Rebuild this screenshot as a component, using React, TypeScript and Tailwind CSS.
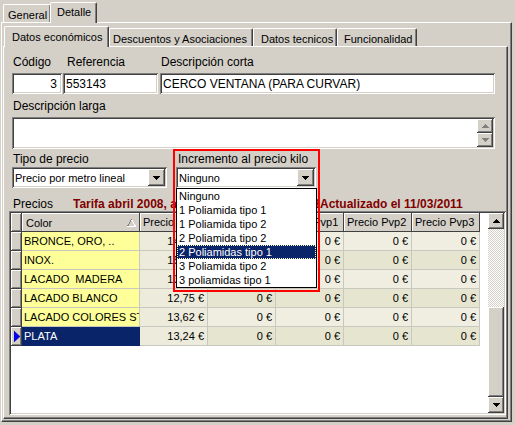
import React from "react";

const RAISED =
  "shadow-[inset_-1px_-1px_#404040,inset_1px_1px_#ffffff,inset_-2px_-2px_#808080]";
const SUNKEN =
  "shadow-[inset_1px_1px_#808080,inset_-1px_-1px_#ffffff,inset_2px_2px_#404040,inset_-2px_-2px_#d4d0c8]";

const rows = [
  { color: "BRONCE, ORO, ..", price: "14,07 €" },
  { color: "INOX.", price: "15,36 €" },
  { color: "LACADO  MADERA", price: "13,98 €" },
  { color: "LACADO BLANCO", price: "12,75 €" },
  { color: "LACADO COLORES STANDARD", price: "13,62 €" },
  { color: "PLATA", price: "13,24 €", selected: true },
];

const headers = ["Precio Coste", "Precio Pvp", "Precio Pvp1", "Precio Pvp2", "Precio Pvp3"];

const options = [
  "Ninguno",
  "1 Poliamida tipo 1",
  "1 Poliamida tipo 2",
  "2 Poliamida tipo 2",
  "2 Poliamidas tipo 1",
  "3 Poliamida tipo 2",
  "3 poliamidas tipo 1",
];

function DownArrow({ color = "#000000" }: { color?: string }) {
  return (
    <svg width="7" height="4" viewBox="0 0 7 4" shapeRendering="crispEdges">
      <path d="M0 0h7v1H0zM1 1h5v1H1zM2 2h3v1H2zM3 3h1v1H3z" fill={color} />
    </svg>
  );
}

function UpArrow({ color = "#000000" }: { color?: string }) {
  return (
    <svg width="7" height="4" viewBox="0 0 7 4" shapeRendering="crispEdges">
      <path d="M3 0h1v1H3zM2 1h3v1H2zM1 2h5v1H1zM0 3h7v1H0z" fill={color} />
    </svg>
  );
}

function Select({ value, width }: { value: string; width: string }) {
  return (
    <div className={`flex h-[21px] items-center bg-white pl-[3px] pr-[2px] text-[11px] ${width} ${SUNKEN}`}>
      <span className="flex-1">{value}</span>
      <div className={`flex h-[17px] w-[17px] items-center justify-center bg-[#d4d0c8] ${RAISED}`}>
        <DownArrow />
      </div>
    </div>
  );
}

export default function App() {
  return (
    <div className="relative h-[425px] w-[515px] overflow-hidden bg-[#d4d0c8] font-['Liberation_Sans',Arial,sans-serif] text-[12px] leading-[14px] text-black">
      {/* outer tabs */}
      <div className="flex h-[22px] items-end pl-[3px] text-[11px]">
        <div className="h-[18px] w-[48px] rounded-t-[2px] border-l border-r border-t border-white border-r-[#404040] pl-[4px] pt-[3px] shadow-[inset_-1px_0_#808080]">
          General
        </div>
        <div className="relative z-10 -mb-px -ml-px h-[21px] w-[47px] rounded-t-[2px] border-l border-r border-t border-white border-r-[#404040] bg-[#d4d0c8] pl-[6px] pt-[2px] shadow-[inset_-1px_0_#808080]">
          Detalle
        </div>
      </div>

      {/* outer panel */}
      <div className="ml-[1px] flex h-[400px] w-[511px] flex-col border border-white border-b-[#404040] border-r-[#404040] pl-[1px] pt-[3px] shadow-[inset_-1px_-1px_#808080]">
        {/* inner tabs */}
        <div className="flex h-[20px] items-end text-[11px]">
          <div className="relative z-10 -mb-px ml-[1px] h-[21px] w-[105px] rounded-t-[2px] border-l border-r border-t border-white border-r-[#404040] bg-[#d4d0c8] pl-[7px] pt-[3px] shadow-[inset_-1px_0_#808080]">
            Datos económicos
          </div>
          <div className="h-[18px] w-[144px] rounded-t-[2px] border-l border-r border-t border-white border-r-[#404040] pl-[3px] pt-[3px] shadow-[inset_-1px_0_#808080]">
            Descuentos y Asociaciones
          </div>
          <div className="h-[18px] w-[84px] rounded-t-[2px] border-l border-r border-t border-white border-r-[#404040] pl-[7px] pt-[3px] shadow-[inset_-1px_0_#808080]">
            Datos tecnicos
          </div>
          <div className="h-[18px] w-[80px] rounded-t-[2px] border-l border-r border-t border-white border-r-[#404040] pl-[6px] pt-[3px] shadow-[inset_-1px_0_#808080]">
            Funcionalidad
          </div>
        </div>

        {/* inner panel */}
        <div className="h-[373px] w-[505px] border border-white border-b-[#404040] border-r-[#404040] pl-[8px] pt-[8px] shadow-[inset_-1px_-1px_#808080]">
          <div className="flex">
            <div className="w-[50px]">
              <div className="h-[14px] pl-[1px]">Código</div>
              <div className={`mt-[4px] h-[21px] bg-white pr-[5px] pt-[4px] text-right ${SUNKEN}`}>3</div>
            </div>
            <div className="ml-[1px] w-[95px]">
              <div className="h-[14px] pl-[4px]">Referencia</div>
              <div className={`mt-[4px] h-[21px] bg-white pl-[3px] pt-[4px] ${SUNKEN}`}>553143</div>
            </div>
            <div className="ml-[2px] w-[335px]">
              <div className="h-[14px] pl-[1px]">Descripción corta</div>
              <div className={`mt-[4px] h-[21px] bg-white pl-[3px] pt-[4px] ${SUNKEN}`}>
                CERCO VENTANA (PARA CURVAR)
              </div>
            </div>
          </div>

          <div className="mt-[5px] h-[14px] pl-[1px]">Descripción larga</div>
          <div className={`mt-[4px] flex h-[32px] w-[483px] justify-end bg-white pr-[2px] pt-[2px] ${SUNKEN}`}>
            <div className="flex flex-col">
              <div className={`flex h-[14px] w-[16px] items-center justify-center bg-[#d4d0c8] ${RAISED}`}>
                <UpArrow color="#808080" />
              </div>
              <div className={`flex h-[14px] w-[16px] items-center justify-center bg-[#d4d0c8] ${RAISED}`}>
                <DownArrow color="#808080" />
              </div>
            </div>
          </div>

          <div className="mt-[3px] flex">
            <div className="w-[155px]">
              <div className="h-[14px] pl-[1px]">Tipo de precio</div>
              <div className="mt-[1px]">
                <Select value="Precio por metro lineal" width="w-[155px]" />
              </div>
            </div>
            <div className="ml-[9px] w-[140px]">
              <div className="h-[14px] pl-[2px]">Incremento al precio kilo</div>
              <div className="mt-[1px]">
                <Select value="Ninguno" width="w-[140px]" />
              </div>
            </div>
          </div>

          <div className="mt-[9px] flex h-[14px]">
            <span className="w-[61px] pl-[1px]">Precios</span>
            <span className="inline-block w-[247px] overflow-hidden whitespace-nowrap font-bold text-[#800000]">
              Tarifa abril 2008, aplicada desde 01/04/2008.
            </span>
            <span className="whitespace-nowrap font-bold text-[#800000]">Actualizado el 11/03/2011</span>
          </div>

          {/* grid */}
          <div className={`-ml-[3px] flex h-[204px] w-[497px] bg-white p-[2px] text-[11px] ${SUNKEN}`}>
            <div className="flex-1">
              <div className="flex h-[19px]">
                <div className={`w-[11px] bg-[#d4d0c8] ${RAISED}`} />
                <div className="flex w-[118px] items-center justify-between bg-[#d4d0c8] pl-[4px] pr-[4px] shadow-[inset_-1px_-1px_#404040,inset_1px_1px_#ffffff]">
                  <span>Color</span>
                  <svg width="9" height="8" viewBox="0 0 9 8" shapeRendering="crispEdges">
                    <path d="M4.5 0.5L8.5 7.5H0.5Z" fill="none" stroke="#ffffff" />
                    <path d="M4.5 0.5L0.5 7.5" fill="none" stroke="#808080" />
                  </svg>
                </div>
                {headers.map((h) => (
                  <div
                    key={h}
                    className="w-[68px] overflow-hidden whitespace-nowrap bg-[#d4d0c8] pl-[3px] leading-[19px] shadow-[inset_-1px_-1px_#404040,inset_1px_1px_#ffffff]"
                  >
                    {h}
                  </div>
                ))}
              </div>
              {rows.map((r, i) => (
                <div key={r.color} className="flex h-[19px]">
                  <div className={`flex w-[11px] items-center justify-center bg-[#d4d0c8] ${RAISED}`}>
                    {r.selected ? (
                      <svg width="6" height="11" viewBox="0 0 6 11">
                        <path d="M0 0L6 5.5L0 11Z" fill="#0000ff" stroke="#000080" strokeWidth="0.5" />
                      </svg>
                    ) : null}
                  </div>
                  <div
                    className={`w-[118px] overflow-hidden whitespace-pre border-b border-r pl-[2px] leading-[18px] ${
                      r.selected
                        ? "border-[#0a246a] bg-[#0a246a] text-white"
                        : "border-[#c8c8c0] bg-[#ffff99]"
                    }`}
                  >
                    {r.color}
                  </div>
                  <div className="w-[68px] border-b border-r border-[#c8c8c0] bg-[#ecebdc] pr-[3px] text-right leading-[18px]">
                    {r.price}
                  </div>
                  {[0, 1, 2, 3].map((c) => (
                    <div
                      key={c}
                      className={`w-[68px] border-b border-r border-[#c8c8c0] pr-[3px] text-right leading-[18px] ${
                        i % 2 === 1 ? "bg-[#e6e5cf]" : "bg-[#efeee1]"
                      }`}
                    >
                      0 €
                    </div>
                  ))}
                </div>
              ))}
            </div>
            {/* scrollbar */}
            <div className="flex w-[16px] flex-col">
              <div className={`flex h-[16px] items-center justify-center bg-[#d4d0c8] ${RAISED}`}>
                <UpArrow />
              </div>
              <div className="flex-1 bg-[repeating-conic-gradient(#d4d0c8_0%_25%,#ffffff_0%_50%)] bg-[length:2px_2px]" />
              <div className={`h-[90px] bg-[#d4d0c8] ${RAISED}`} />
              <div className={`flex h-[16px] items-center justify-center bg-[#d4d0c8] ${RAISED}`}>
                <DownArrow />
              </div>
            </div>
          </div>
        </div>
      </div>

      {/* open dropdown list */}
      <div className="absolute left-[176px] top-[188px] z-20 w-[141px] border border-black bg-white text-[11px]">
        {options.map((o) => (
          <div
            key={o}
            className={`h-[14px] pl-[2px] leading-[14px] ${
              o === "2 Poliamidas tipo 1"
                ? "bg-[#0a246a] text-white outline-1 -outline-offset-1 outline-dotted outline-[#ffffc0]"
                : ""
            }`}
          >
            {o}
          </div>
        ))}
      </div>

      {/* red highlight */}
      <div className="pointer-events-none absolute left-[173px] top-[149px] z-30 h-[143px] w-[147px] border-2 border-[#ff0000]" />
    </div>
  );
}
